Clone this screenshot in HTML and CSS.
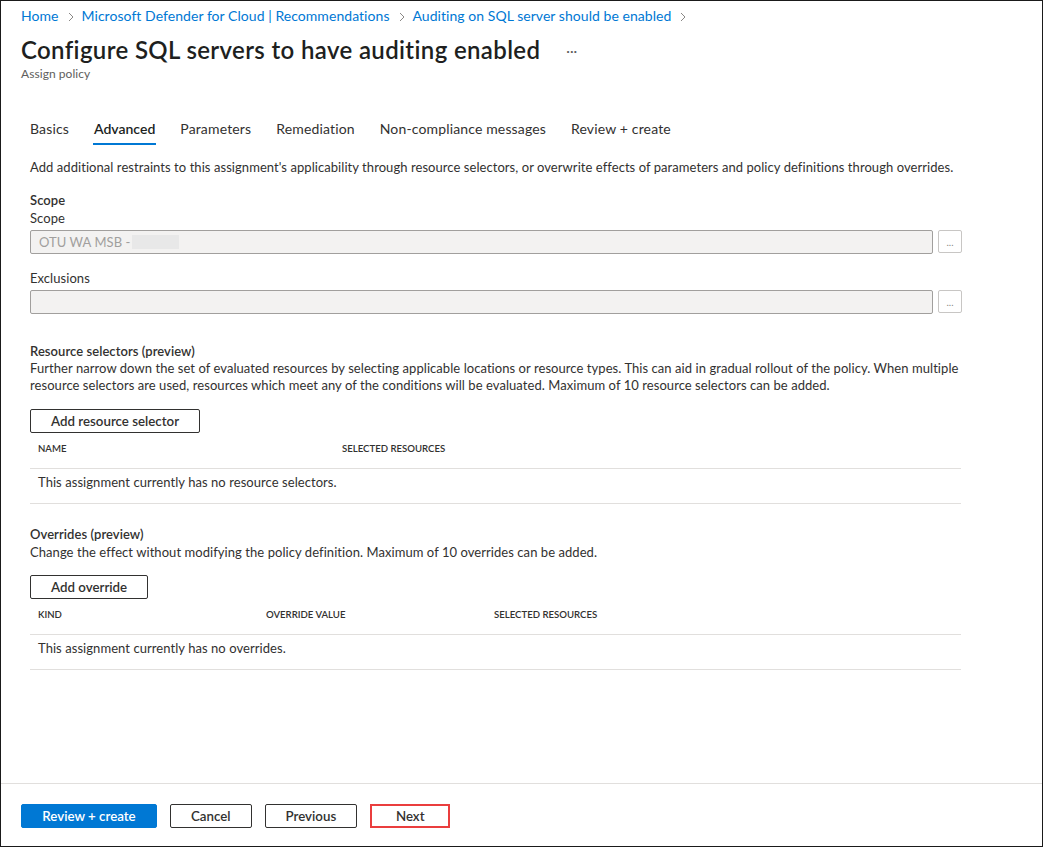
FILE: index.html
```html
<!DOCTYPE html>
<html lang="en">
<head>
<meta charset="utf-8">
<title>Configure SQL servers to have auditing enabled</title>
<link rel="stylesheet" href="styles.css">
</head>
<body>
<div class="frame">
  <main class="main">
    <header class="header">
      <nav class="breadcrumb">
        <a href="#">Home</a>
        <svg class="chev" width="6" height="10" viewBox="0 0 6 10"><path d="M1 1l4 4-4 4" fill="none" stroke="#8a8886" stroke-width="1"/></svg>
        <a href="#">Microsoft Defender for Cloud | Recommendations</a>
        <svg class="chev" width="6" height="10" viewBox="0 0 6 10"><path d="M1 1l4 4-4 4" fill="none" stroke="#8a8886" stroke-width="1"/></svg>
        <a href="#">Auditing on SQL server should be enabled</a>
        <svg class="chev" width="6" height="10" viewBox="0 0 6 10"><path d="M1 1l4 4-4 4" fill="none" stroke="#8a8886" stroke-width="1"/></svg>
      </nav>
      <div class="title-row">
        <h1 class="title">Configure SQL servers to have auditing enabled</h1>
        <span class="more">&middot;&middot;&middot;</span>
      </div>
      <div class="subtitle">Assign policy</div>
    </header>

    <div class="tabs">
      <span class="tab">Basics</span>
      <span class="tab active">Advanced</span>
      <span class="tab">Parameters</span>
      <span class="tab">Remediation</span>
      <span class="tab">Non-compliance messages</span>
      <span class="tab">Review + create</span>
    </div>

    <section class="content">
      <p class="intro">Add additional restraints to this assignment's applicability through resource selectors, or overwrite effects of parameters and policy definitions through overrides.</p>

      <h2 class="section-title scope-title">Scope</h2>
      <div class="label">Scope</div>
      <div class="field-row">
        <div class="field">OTU WA MSB - <span class="redact"></span></div>
        <button class="dots">...</button>
      </div>
      <div class="label label-gap">Exclusions</div>
      <div class="field-row">
        <div class="field"></div>
        <button class="dots">...</button>
      </div>

      <h2 class="section-title rs-title">Resource selectors (preview)</h2>
      <p class="desc">Further narrow down the set of evaluated resources by selecting applicable locations or resource types. This can aid in gradual rollout of the policy. When multiple resource selectors are used, resources which meet any of the conditions will be evaluated. Maximum of 10 resource selectors can be added.</p>
      <button class="btn btn-add">Add resource selector</button>
      <div class="table">
        <div class="thead cols-2"><span>Name</span><span>Selected resources</span></div>
        <div class="trow">This assignment currently has no resource selectors.</div>
      </div>

      <h2 class="section-title ov-title">Overrides (preview)</h2>
      <p class="desc ov-desc">Change the effect without modifying the policy definition. Maximum of 10 overrides can be added.</p>
      <button class="btn btn-add ov-add">Add override</button>
      <div class="table">
        <div class="thead cols-3"><span>Kind</span><span>Override value</span><span>Selected resources</span></div>
        <div class="trow">This assignment currently has no overrides.</div>
      </div>
    </section>
  </main>

  <footer class="footer">
    <button class="btn btn-primary">Review + create</button>
    <button class="btn">Cancel</button>
    <button class="btn">Previous</button>
    <button class="btn btn-next">Next</button>
  </footer>
</div>
</body>
</html>
```

FILE: styles.css
```css
* { box-sizing: border-box; }

html, body {
  margin: 0;
  padding: 0;
  background: #ffffff;
}

body {
  font-family: Lato, "Open Sans", sans-serif;
  font-size: 13px;
  letter-spacing: 0.06px;
  color: #323130;
}

.frame {
  width: 1043px;
  height: 847px;
  border: 1px solid #1a1a1a;
  display: flex;
  flex-direction: column;
  background: #ffffff;
}

.main {
  flex: 1;
}

.header {
  padding-left: 20px;
}

.breadcrumb {
  display: flex;
  align-items: center;
  height: 20px;
  margin-top: 5px;
  font-size: 14px;
  line-height: 20px;
  letter-spacing: 0.05px;
}

.breadcrumb a {
  color: #0078d4;
  text-decoration: none;
}

.chev {
  margin: 1px 8px 0 9px;
}

.title-row {
  display: flex;
  align-items: center;
  margin-top: 8px;
  height: 32px;
}

.title {
  margin: 0;
  font-size: 24px;
  line-height: 32px;
  font-weight: 600;
  letter-spacing: 0.36px;
  color: #201f1e;
}

.more {
  margin-left: 26px;
  font-size: 14px;
  color: #605e5c;
  letter-spacing: 0;
}

.subtitle {
  font-size: 12px;
  line-height: 16px;
  color: #605e5c;
}

.tabs {
  display: flex;
  margin-top: 31px;
  padding-left: 16.5px;
  height: 32px;
}

.tab {
  padding: 0 12.5px;
  font-size: 14px;
  line-height: 32px;
  letter-spacing: 0.15px;
  color: #323130;
  position: relative;
}

.tab.active {
  font-weight: 600;
  letter-spacing: 0;
  color: #201f1e;
}

.tab.active::after {
  content: "";
  position: absolute;
  left: 12px;
  right: 12px;
  bottom: 0;
  height: 2px;
  background: #0078d4;
}

.content {
  padding-left: 29px;
  width: 961px;
}

.intro {
  margin: 13px 0 0;
  line-height: 18px;
}

.section-title {
  margin: 0;
  font-size: 13px;
  line-height: 18px;
  font-weight: 600;
  color: #323130;
}

.scope-title { margin-top: 15px; }
.rs-title { margin-top: 28px; }
.ov-title { margin-top: 21px; }

.label {
  line-height: 18px;
}

.label-gap {
  margin-top: 15px;
}

.field-row {
  display: flex;
  align-items: flex-start;
  margin-top: 3px;
}

.field {
  flex: 1;
  height: 24px;
  border: 1px solid #a19f9d;
  border-radius: 2px;
  background: #f3f2f1;
  color: #a19f9d;
  line-height: 22px;
  padding-left: 8px;
  display: flex;
  align-items: center;
}

.redact {
  display: inline-block;
  width: 47px;
  height: 14px;
  margin-left: 2px;
  background: #e8e8e8;
}

.dots {
  width: 24px;
  height: 23px;
  margin-left: 5px;
  border: 1px solid #c8c6c4;
  border-radius: 2px;
  background: #ffffff;
  color: #8a8886;
  font-family: inherit;
  font-size: 10px;
  line-height: 18px;
  padding: 0;
}

.desc {
  margin: 0;
  line-height: 17px;
}

.ov-desc {
  margin-top: 1px;
}

.btn {
  height: 24px;
  padding: 0 20px;
  min-width: 80px;
  border: 1px solid #323130;
  border-radius: 2px;
  background: #ffffff;
  color: #323130;
  font-family: inherit;
  font-size: 13.3px;
  font-weight: 600;
  line-height: 20px;
  letter-spacing: 0;
  cursor: pointer;
}

.btn-add {
  display: block;
  margin-top: 15px;
}

.ov-add {
  margin-top: 14px;
}

.table {
  width: 931px;
}

.thead {
  display: grid;
  padding: 8px 8px 11px;
  font-size: 9.6px;
  line-height: 16px;
  font-weight: 600;
  letter-spacing: 0;
  text-transform: uppercase;
  color: #323130;
  border-bottom: 1px solid #e1dfdd;
}

.cols-2 { grid-template-columns: 304px 1fr; }
.cols-3 { grid-template-columns: 228px 228px 1fr; }

.trow {
  padding: 4px 8px 12px;
  line-height: 18px;
  border-bottom: 1px solid #e1dfdd;
}

.footer {
  display: flex;
  gap: 13px;
  padding: 20px 0 18px 20px;
  border-top: 1px solid #e1dfdd;
}

.btn-primary {
  background: #0078d4;
  border-color: #0078d4;
  color: #ffffff;
  min-width: 136px;
}

.btn-next {
  border: 2px solid #ea3e3e;
  border-radius: 0;
}
```
